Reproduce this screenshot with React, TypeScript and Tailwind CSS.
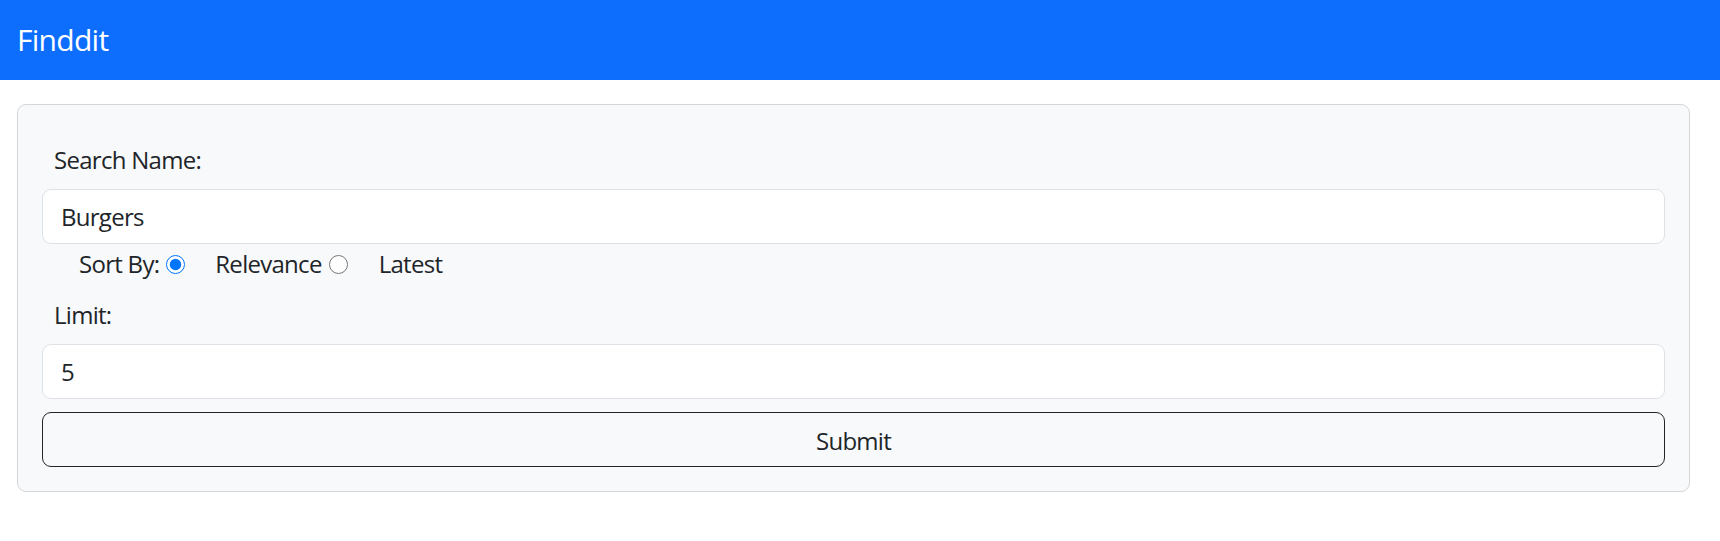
import React, { useState } from "react";

const App: React.FC = () => {
  const [name, setName] = useState("Burgers");
  const [sort, setSort] = useState("relevance");
  const [limit, setLimit] = useState("5");

  return (
    <div className="w-full min-h-screen bg-white text-[#212529] font-['Open_Sans',sans-serif] text-[24px] tracking-[-0.03em]">
      {/* Navbar */}
      <nav className="h-[80px] bg-[#0d6efd] flex items-center px-[17px]">
        <span className="text-white text-[30px] leading-none">Finddit</span>
      </nav>

      {/* Form card */}
      <div className="mt-6 ml-[17px] mr-[30px] border border-[#d5d6d8] rounded-[9px] bg-[#f8f9fa] p-6">
        <label className="block mt-[13px] pl-3 leading-9">Search Name:</label>
        <input
          value={name}
          onChange={(e) => setName(e.target.value)}
          className="block w-full mt-[11px] h-[55px] rounded-[9px] border border-[#dee2e6] bg-white px-[18px] outline-none"
        />

        <div className="mt-[2px] h-9 flex items-center pl-[37px]">
          <span>Sort By:</span>
          <input
            type="radio"
            name="sort"
            checked={sort === "relevance"}
            onChange={() => setSort("relevance")}
            className="ml-[7px] w-[19px] h-[19px] m-0"
          />
          <span className="ml-[30px]">Relevance</span>
          <input
            type="radio"
            name="sort"
            checked={sort === "latest"}
            onChange={() => setSort("latest")}
            className="ml-[7px] w-[19px] h-[19px] m-0"
          />
          <span className="ml-[31px]">Latest</span>
        </div>

        <label className="block mt-[15px] pl-3 leading-9">Limit:</label>
        <input
          value={limit}
          onChange={(e) => setLimit(e.target.value)}
          className="block w-full mt-[11px] h-[55px] rounded-[9px] border border-[#dee2e6] bg-white px-[18px] outline-none"
        />

        <button className="block w-full mt-[13px] h-[55px] rounded-[9px] border border-[#212529] bg-transparent pt-[2px]">
          Submit
        </button>
      </div>
    </div>
  );
};

export default App;
